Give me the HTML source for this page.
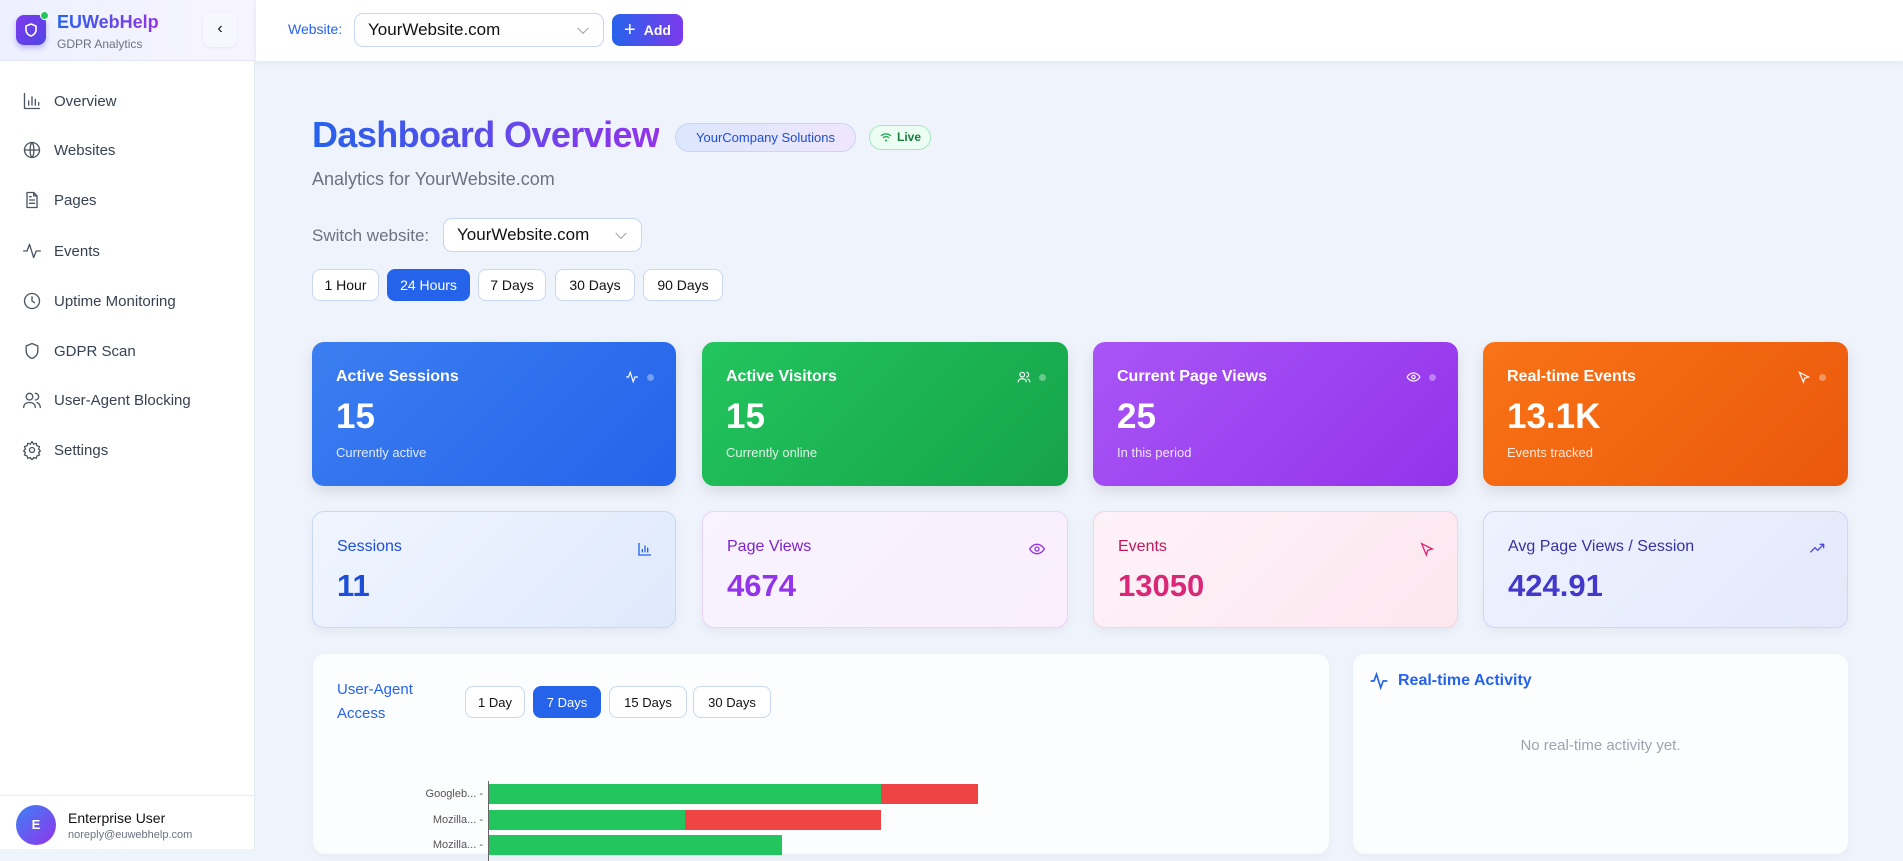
<!DOCTYPE html>
<html><head><meta charset="utf-8"><style>
*{box-sizing:border-box;margin:0;padding:0}
body{width:1903px;height:849px;overflow:hidden;font-family:"Liberation Sans",sans-serif;background:#eff3fb;position:relative;color:#111}
.abs{position:absolute}
#side{left:0;top:0;width:255px;height:849px;background:#fff;border-right:1px solid #e5e9f2}
#side .top{position:absolute;left:0;top:0;width:255px;height:61px;background:linear-gradient(90deg,#eef0ff,#f7f5ff);border-bottom:1px solid #e3e7f3}
.nav{position:absolute;left:22px;display:flex;align-items:center;font-size:15px;color:#374151}
.nav svg{width:20px;height:20px;margin-right:12px;fill:none;stroke:#4b5563;stroke-width:1.6;stroke-linecap:round;stroke-linejoin:round}
#hdr{left:256px;top:0;width:1647px;height:61px;background:#fff;box-shadow:0 2px 8px rgba(0,0,0,.06)}
.sel{position:absolute;background:#fff;border:1px solid #c7d6f5;border-radius:9px;font-size:17px;display:flex;align-items:center;padding-left:13px;color:#111}
.sel:after{content:"";position:absolute;right:16px;top:50%;width:7px;height:7px;border-right:1.3px solid #999;border-bottom:1.3px solid #999;transform:translateY(-70%) rotate(45deg)}
.tb{position:absolute;top:269px;height:32px;border:1px solid #c9d7f2;border-radius:8px;background:#fff;font-size:14px;display:flex;align-items:center;justify-content:center}
.on{background:#2563eb;color:#fff;border-color:#2563eb}
.card{position:absolute;border-radius:12px;padding:0 24px}
.big{color:#fff;top:342px;height:144px;box-shadow:0 6px 14px rgba(0,0,0,.1)}
.big .t{position:absolute;left:24px;top:26px;font-size:16px;font-weight:bold}
.big .n{position:absolute;left:24px;top:55px;font-size:35px;font-weight:bold}
.big .s{position:absolute;left:24px;top:103px;font-size:13px;opacity:.85}
.big .ic{position:absolute;right:22px;top:28px;display:flex;align-items:center;gap:8px}
.dot{width:7px;height:7px;border-radius:50%;background:rgba(255,255,255,.35)}
.sm{top:511px;height:117px;border:1px solid #c9d9f5;box-shadow:0 4px 10px rgba(0,0,0,.05)}
.sm .t{position:absolute;left:24px;top:26px;font-size:16px}
.sm .n{position:absolute;left:24px;top:56px;font-size:31px;font-weight:bold}
.sm svg{position:absolute;right:22px;top:29px}
.panel{position:absolute;top:654px;height:200px;background:#fcfdff;border-radius:12px;box-shadow:0 2px 8px rgba(0,0,0,.04)}
.b{position:absolute;height:20px}
</style></head><body>
<div id="side" class="abs">
 <div class="top">
  <div class="abs" style="left:16px;top:15px;width:30px;height:30px;border-radius:8px;background:linear-gradient(135deg,#7c3aed,#4f46e5);box-shadow:0 3px 6px rgba(80,70,229,.35)"><svg width="30" height="30" viewBox="0 0 30 30"><path d="M15 9l-5 2v4c0 3 2.3 5 5 6 2.7-1 5-3 5-6v-4z" fill="none" stroke="#fff" stroke-width="1.6"/></svg></div>
  <div class="abs" style="left:40px;top:11px;width:9px;height:9px;border-radius:50%;background:#22c55e;border:1px solid #fff"></div>
  <div class="abs" style="left:57px;top:12px;font-size:18px;font-weight:bold;background:linear-gradient(90deg,#2563eb,#9333ea);-webkit-background-clip:text;color:transparent">EUWebHelp</div>
  <div class="abs" style="left:57px;top:37px;font-size:12px;color:#6b7280">GDPR Analytics</div>
  <div class="abs" style="left:203px;top:13px;width:34px;height:34px;border-radius:8px;background:#f7f7ff;box-shadow:0 1px 3px rgba(0,0,0,.06);font-size:16px;text-align:center;line-height:32px;color:#111">‹</div>
 </div>
 <div class="nav" style="top:91px"><svg viewBox="0 0 24 24"><path d="M3 3v18h18M8 17v-5M12 17V7M16 17v-7M20 17v-3"/></svg>Overview</div>
 <div class="nav" style="top:140px"><svg viewBox="0 0 24 24"><circle cx="12" cy="12" r="9"/><path d="M3 12h18M12 3c3 3 3 15 0 18M12 3c-3 3-3 15 0 18"/></svg>Websites</div>
 <div class="nav" style="top:190px"><svg viewBox="0 0 24 24"><path d="M6 3h8l4 4v14H6zM14 3v4h4M9 12h6M9 16h6M9 8h2"/></svg>Pages</div>
 <div class="nav" style="top:241px"><svg viewBox="0 0 24 24"><path d="M2 12h4l3-8 5 16 3-8h5"/></svg>Events</div>
 <div class="nav" style="top:291px"><svg viewBox="0 0 24 24"><circle cx="12" cy="12" r="9"/><path d="M12 7v5l3 2"/></svg>Uptime Monitoring</div>
 <div class="nav" style="top:341px"><svg viewBox="0 0 24 24"><path d="M12 3l-7 3v6c0 4 3 7.5 7 9 4-1.5 7-5 7-9V6z"/></svg>GDPR Scan</div>
 <div class="nav" style="top:390px"><svg viewBox="0 0 24 24"><circle cx="9" cy="8" r="4"/><path d="M2 21c0-4 3-6 7-6s7 2 7 6M16 4a4 4 0 010 8M22 21c0-3-2-5-4-6"/></svg>User-Agent Blocking</div>
 <div class="nav" style="top:440px"><svg viewBox="0 0 24 24"><circle cx="12" cy="12" r="3"/><path d="M12 2l2 3 3-1 1 3 3 1-1 3 2 2-2 2 1 3-3 1-1 3-3-1-2 3-2-3-3 1-1-3-3-1 1-3-2-2 2-2-1-3 3-1 1-3 3 1z"/></svg>Settings</div>
 <div class="abs" style="left:0;top:795px;width:255px;border-top:1px solid #e5e9f2"></div>
 <div class="abs" style="left:16px;top:805px;width:40px;height:40px;border-radius:50%;background:linear-gradient(135deg,#3b82f6,#9333ea);color:#fff;font-size:13px;font-weight:bold;text-align:center;line-height:40px">E</div>
 <div class="abs" style="left:68px;top:810px;font-size:14px;color:#111">Enterprise User</div>
 <div class="abs" style="left:68px;top:829px;font-size:11px;color:#6b7280">noreply@euwebhelp.com</div>
</div>
<div id="hdr" class="abs">
 <div class="abs" style="left:32px;top:21px;font-size:14px;color:#2563eb">Website:</div>
 <div class="sel" style="left:98px;top:13px;width:250px;height:34px">YourWebsite.com</div>
 <div class="abs" style="left:356px;top:14px;width:71px;height:32px;border-radius:8px;background:linear-gradient(90deg,#2563eb,#7c3aed);color:#fff;font-size:14px;font-weight:bold;display:flex;align-items:center;justify-content:center;gap:8px"><span style="font-size:20px;font-weight:normal">+</span>Add</div>
</div>
<div class="abs" style="left:312px;top:114px;font-size:36px;font-weight:bold;letter-spacing:-0.6px;background:linear-gradient(90deg,#2563eb,#9333ea);-webkit-background-clip:text;color:transparent">Dashboard Overview</div>
<div class="abs" style="left:675px;top:123px;width:181px;height:29px;border-radius:15px;background:linear-gradient(90deg,#dbe6fd,#efe6fd);border:1px solid #c7d6f5;color:#1d4ed8;font-size:13px;text-align:center;line-height:27px">YourCompany Solutions</div>
<div class="abs" style="left:869px;top:125px;width:62px;height:25px;border-radius:13px;background:#ecfdf3;border:1px solid #a7e8bf;color:#15803d;font-size:12px;font-weight:bold;line-height:23px;padding-left:27px"><svg class="abs" style="left:10px;top:6px" width="12" height="11" viewBox="0 0 12 11"><path d="M1 4a7 7 0 0110 0M3 6a4 4 0 016 0" fill="none" stroke="#16a34a" stroke-width="1.2"/><circle cx="6" cy="8.5" r="1" fill="#16a34a"/></svg>Live</div>
<div class="abs" style="left:312px;top:169px;font-size:18px;color:#6b7280">Analytics for YourWebsite.com</div>
<div class="abs" style="left:312px;top:226px;font-size:17px;color:#6b7280">Switch website:</div>
<div class="sel" style="left:443px;top:218px;width:199px;height:34px">YourWebsite.com</div>
<div class="tb" style="left:312px;width:67px">1 Hour</div>
<div class="tb on" style="left:387px;width:83px">24 Hours</div>
<div class="tb" style="left:478px;width:68px">7 Days</div>
<div class="tb" style="left:555px;width:80px">30 Days</div>
<div class="tb" style="left:643px;width:80px">90 Days</div>

<div class="card big" style="left:312px;width:364px;background:linear-gradient(135deg,#3b7ef0,#2563eb)"><div class="t">Active Sessions</div><div class="n">15</div><div class="s">Currently active</div><div class="ic"><svg width="14" height="14" viewBox="0 0 24 24"><path d="M2 12h4l3-8 5 16 3-8h5" fill="none" stroke="#fff" stroke-width="2"/></svg><div class="dot"></div></div></div>
<div class="card big" style="left:702px;width:366px;background:linear-gradient(135deg,#22c55e,#16a34a)"><div class="t">Active Visitors</div><div class="n">15</div><div class="s">Currently online</div><div class="ic"><svg width="14" height="14" viewBox="0 0 24 24" fill="none" stroke="#fff" stroke-width="2"><circle cx="9" cy="8" r="4"/><path d="M2 21c0-4 3-6 7-6s7 2 7 6M16 4a4 4 0 010 8M22 21c0-3-2-5-4-6"/></svg><div class="dot"></div></div></div>
<div class="card big" style="left:1093px;width:365px;background:linear-gradient(135deg,#a855f7,#9333ea)"><div class="t">Current Page Views</div><div class="n">25</div><div class="s">In this period</div><div class="ic"><svg width="15" height="14" viewBox="0 0 24 24" fill="none" stroke="#fff" stroke-width="2"><path d="M1 12s4-7 11-7 11 7 11 7-4 7-11 7S1 12 1 12z"/><circle cx="12" cy="12" r="3"/></svg><div class="dot"></div></div></div>
<div class="card big" style="left:1483px;width:365px;background:linear-gradient(135deg,#f97316,#ea580c)"><div class="t">Real-time Events</div><div class="n">13.1K</div><div class="s">Events tracked</div><div class="ic"><svg width="14" height="14" viewBox="0 0 24 24" fill="none" stroke="#fff" stroke-width="2"><path d="M4 4l7 17 2-7 7-2z"/></svg><div class="dot"></div></div></div>

<div class="card sm" style="left:312px;width:364px;background:linear-gradient(135deg,#f0f5ff,#dfe9fc)"><div class="t" style="color:#1d4ed8">Sessions</div><div class="n" style="color:#1d4ed8">11</div><svg width="16" height="16" viewBox="0 0 24 24" fill="none" stroke="#2563eb" stroke-width="2"><path d="M3 3v18h18M8 17v-5M12 17V7M16 17v-7"/></svg></div>
<div class="card sm" style="left:702px;width:366px;background:linear-gradient(135deg,#f7f3ff,#fbeefc);border-color:#e7d5fb"><div class="t" style="color:#7e22ce">Page Views</div><div class="n" style="color:#9333ea">4674</div><svg width="16" height="16" viewBox="0 0 24 24" fill="none" stroke="#9333ea" stroke-width="2"><path d="M1 12s4-7 11-7 11 7 11 7-4 7-11 7S1 12 1 12z"/><circle cx="12" cy="12" r="3"/></svg></div>
<div class="card sm" style="left:1093px;width:365px;background:linear-gradient(135deg,#fdf2f8,#fde7ef);border-color:#fbd0e0"><div class="t" style="color:#be185d">Events</div><div class="n" style="color:#db2777">13050</div><svg width="16" height="16" viewBox="0 0 24 24" fill="none" stroke="#db2777" stroke-width="2"><path d="M4 4l7 17 2-7 7-2z"/></svg></div>
<div class="card sm" style="left:1483px;width:365px;background:linear-gradient(135deg,#eef2ff,#e4e9fb);border-color:#cdd6f5"><div class="t" style="color:#3730a3">Avg Page Views / Session</div><div class="n" style="color:#4338ca">424.91</div><svg width="16" height="16" viewBox="0 0 24 24" fill="none" stroke="#4f46e5" stroke-width="2"><path d="M2 17l7-7 4 4 9-9M16 5h6v6"/></svg></div>

<div class="panel" style="left:313px;width:1016px">
 <div class="abs" style="left:24px;top:24px;font-size:15px;color:#2563eb;line-height:24px">User-Agent<br>Access</div>
 <div class="tb" style="top:32px;left:152px;width:60px;font-size:13px">1 Day</div>
 <div class="tb on" style="top:32px;left:220px;width:68px;font-size:13px">7 Days</div>
 <div class="tb" style="top:32px;left:296px;width:78px;font-size:13px">15 Days</div>
 <div class="tb" style="top:32px;left:380px;width:78px;font-size:13px">30 Days</div>
 <div class="abs" style="left:175px;top:127px;width:1px;height:80px;background:#666"></div>
 <div class="abs" style="left:110px;top:134px;font-size:11px;color:#555;width:60px;text-align:right">Googleb... -</div>
 <div class="abs" style="left:110px;top:160px;font-size:11px;color:#555;width:60px;text-align:right">Mozilla... -</div>
 <div class="abs" style="left:110px;top:185px;font-size:11px;color:#555;width:60px;text-align:right">Mozilla... -</div>
 <div class="b" style="left:176px;top:130px;width:392px;background:#22c55e"></div><div class="b" style="left:568px;top:130px;width:97px;background:#ef4444"></div>
 <div class="b" style="left:176px;top:156px;width:196px;background:#22c55e"></div><div class="b" style="left:372px;top:156px;width:196px;background:#ef4444"></div>
 <div class="b" style="left:176px;top:181px;width:293px;background:#22c55e"></div>
</div>
<div class="panel" style="left:1353px;width:495px">
 <svg class="abs" style="left:16px;top:17px" width="20" height="20" viewBox="0 0 24 24" fill="none" stroke="#2563eb" stroke-width="2"><path d="M2 12h4l3-8 5 16 3-8h5"/></svg>
 <div class="abs" style="left:45px;top:18px;font-size:16px;font-weight:bold;color:#2563eb">Real-time Activity</div>
 <div class="abs" style="left:0;width:495px;top:83px;text-align:center;font-size:15px;color:#9ca3af">No real-time activity yet.</div>
</div>
</body></html>
